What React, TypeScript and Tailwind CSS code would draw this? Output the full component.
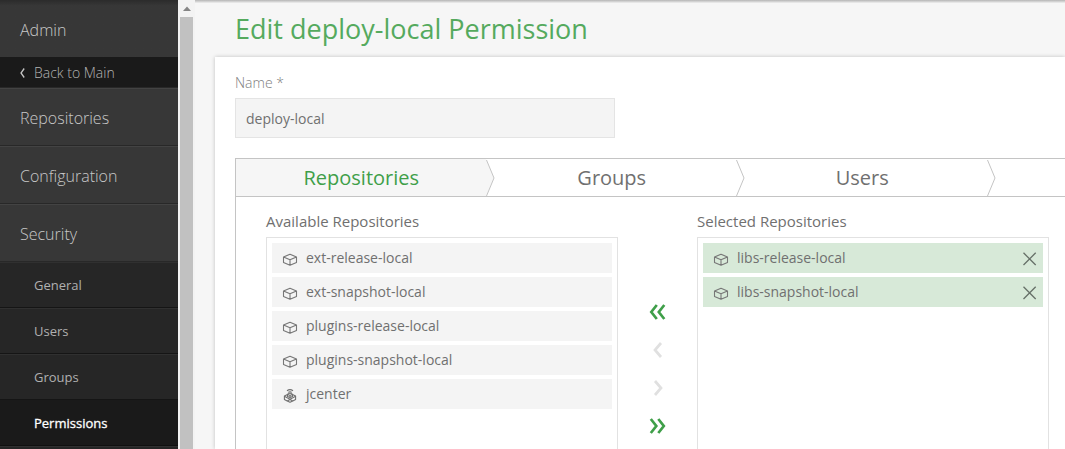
import React from "react";

function BoxIcon() {
  return (
    <svg width="16" height="14" viewBox="0 0 16 14" fill="none" stroke="#777" strokeWidth="1.1" strokeLinejoin="round" className="shrink-0">
      <path d="M8 1.2 L14.5 3.9 V9.4 L8 12.3 L1.5 9.4 V3.9 Z M1.5 3.9 L8 6.8 L14.5 3.9 M8 6.8 V12.3" />
    </svg>
  );
}

function RemoteIcon() {
  return (
    <svg width="16" height="14" viewBox="0 0 16 14" fill="none" stroke="#707070" strokeWidth="1.1" strokeLinejoin="round" className="shrink-0">
      <path d="M5 1.8 Q8 -0.6 11 1.8 M6.2 3.4 Q8 2 9.8 3.4" />
      <path d="M8 4 L10.5 5.2 V7.4 L8 8.6 L5.5 7.4 V5.2 Z M5.5 5.2 L8 6.4 L10.5 5.2 M8 6.4 V8.6" />
      <path d="M5.5 5.6 L2.4 7 V10.4 L5.2 12 L8 10.6 L10.8 12 L13.6 10.4 V7 L10.5 5.6 M2.4 7.2 L5.2 8.8 L8 10.2 L10.8 8.8 L13.6 7.2 M5.2 12 L8 13.3 L10.8 12" />
    </svg>
  );
}

function CloseIcon() {
  return (
    <svg width="14" height="14" viewBox="0 0 14 14" fill="none" stroke="#667068" strokeWidth="1.3" className="mt-px shrink-0">
      <path d="M0.5 0.8 L12.7 13 M12.7 0.8 L0.5 13" />
    </svg>
  );
}

function Arrows({ d, color }: { d: string; color: string }) {
  return (
    <svg width="18" height="16" viewBox="0 0 18 16" fill="none" stroke={color} strokeWidth="2.7" className="shrink-0">
      <path d={d} />
    </svg>
  );
}

function MainItem({ label }: { label: string }) {
  return (
    <div className="flex h-[58px] shrink-0 items-center border-t border-b border-t-[#434343] border-b-[#282828] bg-[#373737] pt-[2px] pl-5 text-[16px] font-light text-[#c8c8c8]">
      {label}
    </div>
  );
}

function SubItem({ label, active }: { label: string; active?: boolean }) {
  return (
    <div
      className={
        active
          ? "flex h-[46px] shrink-0 items-center border-t border-b border-t-[#1a1a1a] border-b-[#111] bg-[#1a1a1a] pt-[2px] pl-[34px] text-[13px] text-white [-webkit-text-stroke:0.3px_white]"
          : "flex h-[46px] shrink-0 items-center border-t border-b border-t-[#303030] border-b-[#151515] bg-[#262626] pt-[2px] pl-[34px] text-[13px] text-[#b0b0b0]"
      }
    >
      {label}
    </div>
  );
}

function Tab({ label, active }: { label: string; active?: boolean }) {
  return (
    <div className="flex w-[250.5px] shrink-0">
      <div className={active ? "flex w-[250px] items-center justify-center bg-[#f6f6f6] pl-px text-[#3f9f49]" : "flex w-[250px] items-center justify-center pl-px text-[#707070]"}>
        <span className="text-[20px] leading-[37px]">{label}</span>
      </div>
      <svg width="9" height="37" viewBox="0 0 9 37" className="-mr-2 shrink-0">
        <path d="M0 0 L8 19 L0 37 Z" fill={active ? "#f6f6f6" : "#ffffff"} />
        <path d="M0.5 1 L8 19 L0.5 37" fill="none" stroke="#c4c4c4" />
      </svg>
    </div>
  );
}

function RepoRow({ label, selected, remote }: { label: string; selected?: boolean; remote?: boolean }) {
  return (
    <div className={selected ? "flex h-[30px] shrink-0 items-center bg-[#d7e9d8] pr-[6px] pl-[10px]" : "flex h-[30px] shrink-0 items-center bg-[#f4f4f4] pl-[10px]"}>
      <span className="pt-1">{remote ? <RemoteIcon /> : <BoxIcon />}</span>
      <span className="grow pl-2 text-[14px] leading-[30px] text-[#707070]">{label}</span>
      {selected && <CloseIcon />}
    </div>
  );
}

const available = ["ext-release-local", "ext-snapshot-local", "plugins-release-local", "plugins-snapshot-local"];

export default function App() {
  return (
    <div className="flex h-[449px] w-[1065px] overflow-hidden bg-[#f6f6f6] font-['Open_Sans',sans-serif]">
      <nav className="flex w-[178px] shrink-0 flex-col overflow-hidden bg-[#262626]">
        <div className="flex h-[57px] shrink-0 items-center bg-linear-to-b from-[#2b2b2b] to-[#373737] to-10% pt-[3px] pl-5 text-[16px] font-light text-[#c8c8c8]">Admin</div>
        <div className="flex h-[31px] shrink-0 items-center border-b border-[#282828] bg-[#1a1a1a] pl-5 text-[14px] font-light text-[#b4b4b4]">
          <svg width="5" height="10" viewBox="0 0 5 10" fill="none" stroke="#c4c4c4" strokeWidth="1.3" className="mt-[2px]">
            <path d="M4.2 0.5 L1 5 L4.2 9.5" />
          </svg>
          <span className="pl-[9px]">Back to Main</span>
        </div>
        <MainItem label="Repositories" />
        <MainItem label="Configuration" />
        <MainItem label="Security" />
        <SubItem label="General" />
        <SubItem label="Users" />
        <SubItem label="Groups" />
        <SubItem label="Permissions" active />
        <div className="h-2 shrink-0 border-t border-[#303030]" />
      </nav>

      <div className="flex w-[17px] shrink-0 flex-col items-start bg-[#f3f3f3] pl-[2px]">
        <div className="flex h-[17px] w-[13px] shrink-0 items-center justify-center">
          <svg width="8" height="5" viewBox="0 0 8 5">
            <path d="M0 5 L4 0.5 L8 5 Z" fill="#858585" />
          </svg>
        </div>
        <div className="w-[13px] grow bg-[#c1c1c1]" />
      </div>

      <main className="flex min-w-0 grow flex-col">
        <div className="h-[3px] shrink-0 bg-linear-to-b from-[#b5b5b5] to-[#f0f0f0]" />
        <h1 className="h-[54px] shrink-0 pl-[40px] text-[27px] leading-[52px] text-[#55aa5e]">Edit deploy-local Permission</h1>
        <section className="ml-[20px] flex min-h-0 grow flex-col bg-white pl-[20px] shadow-[0_0_4px_rgba(0,0,0,0.22)]">
          <div className="h-[41px] shrink-0 pt-[16px] text-[14px] leading-5 font-light text-[#808080]">Name *</div>
          <div className="flex h-10 w-[380px] shrink-0 items-center border border-[#e4e4e4] bg-[#f4f4f4] pl-[10px] text-[14px] text-[#707070]">deploy-local</div>
          <div className="mt-5 flex min-h-0 grow flex-col border-t border-l border-[#c4c4c4]">
            <div className="flex h-[38px] shrink-0 overflow-hidden border-b border-[#c4c4c4]">
              <Tab label="Repositories" active />
              <Tab label="Groups" />
              <Tab label="Users" />
            </div>
            <div className="flex min-h-0 grow pl-[30px]">
              <div className="flex w-[352px] shrink-0 flex-col">
                <div className="h-[40px] shrink-0 pt-[13px] text-[15px] leading-[22px] text-[#707070]">Available Repositories</div>
                <div className="flex grow flex-col gap-1 overflow-hidden border border-b-0 border-[#e2e2e2] p-[5px]">
                  {available.map((name) => (
                    <RepoRow key={name} label={name} />
                  ))}
                  <RepoRow label="jcenter" remote />
                </div>
              </div>
              <div className="flex w-[79px] shrink-0 flex-col items-center gap-[22px] pt-[107px]">
                <Arrows color="#3f9f49" d="M7.8 1 L2.3 8 L7.8 15 M15.3 1 L9.8 8 L15.3 15" />
                <Arrows color="#e0e0e0" d="M12 1 L6 8 L12 15" />
                <Arrows color="#e0e0e0" d="M6 1 L12 8 L6 15" />
                <Arrows color="#3f9f49" d="M1.8 1 L7.3 8 L1.8 15 M9.3 1 L14.8 8 L9.3 15" />
              </div>
              <div className="flex w-[352px] shrink-0 flex-col">
                <div className="h-[40px] shrink-0 pt-[13px] text-[15px] leading-[22px] text-[#707070]">Selected Repositories</div>
                <div className="flex grow flex-col gap-1 overflow-hidden border border-b-0 border-[#e2e2e2] p-[5px]">
                  <RepoRow label="libs-release-local" selected />
                  <RepoRow label="libs-snapshot-local" selected />
                </div>
              </div>
            </div>
          </div>
        </section>
      </main>
    </div>
  );
}
